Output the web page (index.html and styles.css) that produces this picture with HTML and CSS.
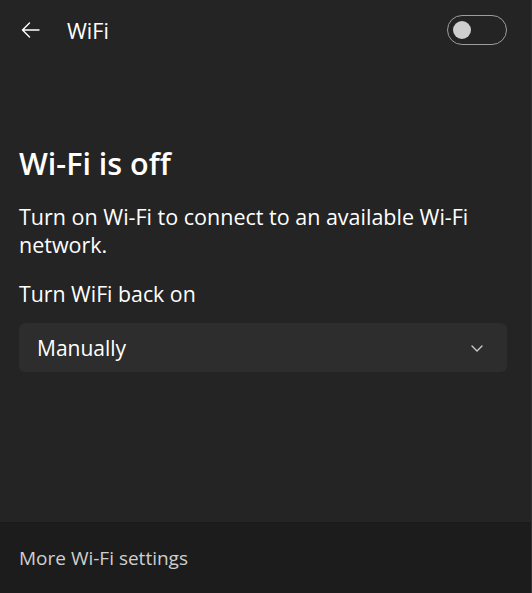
FILE: index.html
```html
<!DOCTYPE html>
<html lang="en">
<head>
<meta charset="utf-8">
<title>WiFi</title>
<link rel="stylesheet" href="styles.css">
</head>
<body>
<div class="panel">
  <header class="header">
    <button class="back" aria-label="Back">
      <svg width="20" height="20" viewBox="0 0 20 20"><path d="M19 10H2.5M9.5 3L2.5 10L9.5 17" fill="none" stroke="#ffffff" stroke-width="1.4" stroke-linecap="round" stroke-linejoin="round"/></svg>
    </button>
    <span class="title">WiFi</span>
    <span class="toggle"><span class="knob"></span></span>
  </header>
  <main class="content">
    <h1 class="heading">Wi-Fi is off</h1>
    <p class="desc">Turn on Wi-Fi to connect to an available Wi-Fi network.</p>
    <p class="label">Turn WiFi back on</p>
    <div class="select">
      <span>Manually</span>
      <svg class="chev" width="12" height="7" viewBox="0 0 12 7"><path d="M1 1L6 6L11 1" fill="none" stroke="#d0d0d0" stroke-width="1.3" stroke-linecap="round" stroke-linejoin="round"/></svg>
    </div>
  </main>
  <footer class="footer">More Wi-Fi settings</footer>
</div>
</body>
</html>
```
FILE: styles.css
```css
* { box-sizing: border-box; }
html, body { margin: 0; padding: 0; }
body {
  width: 532px;
  height: 593px;
  background: #242424;
  font-family: "Open Sans", "Noto Sans", sans-serif;
  color: #ffffff;
  overflow: hidden;
}
.panel {
  height: 593px;
  display: flex;
  flex-direction: column;
  border-right: 1px solid #2e3136;
}
.header {
  height: 60px;
  display: flex;
  align-items: center;
  padding: 0 24px 0 20px;
}
.back {
  background: none;
  border: none;
  padding: 0;
  width: 22px;
  height: 20px;
  display: flex;
  align-items: center;
  margin-right: 25px;
}
.title {
  font-size: 21.5px;
  flex: 1;
}
.toggle {
  width: 60px;
  height: 30px;
  border: 1.5px solid #9d9d9d;
  border-radius: 15px;
  display: flex;
  align-items: center;
  padding-left: 5px;
}
.knob {
  width: 18px;
  height: 18px;
  border-radius: 50%;
  background: #cfcfcf;
}
.content {
  flex: 1;
  padding: 83px 24px 0 19px;
}
.heading {
  margin: 0;
  font-size: 30.5px;
  font-weight: 600;
  line-height: 40px;
}
.desc {
  margin: 20px 0 0;
  font-size: 21.5px;
  line-height: 28px;
}
.label {
  margin: 21px 0 0;
  font-size: 21.3px;
  line-height: 28px;
}
.select {
  margin-top: 15px;
  height: 49px;
  border-radius: 6px;
  background: #2d2d2d;
  display: flex;
  align-items: center;
  justify-content: space-between;
  padding: 0 24px 0 18px;
  font-size: 21px;
}
.chev {
  margin-top: 1px;
}
.footer {
  height: 71px;
  background: #1c1c1c;
  border-top: 1px solid #1a1a1a;
  display: flex;
  align-items: center;
  padding-left: 19px;
  font-size: 19px;
  color: #cfcfcf;
}
```
